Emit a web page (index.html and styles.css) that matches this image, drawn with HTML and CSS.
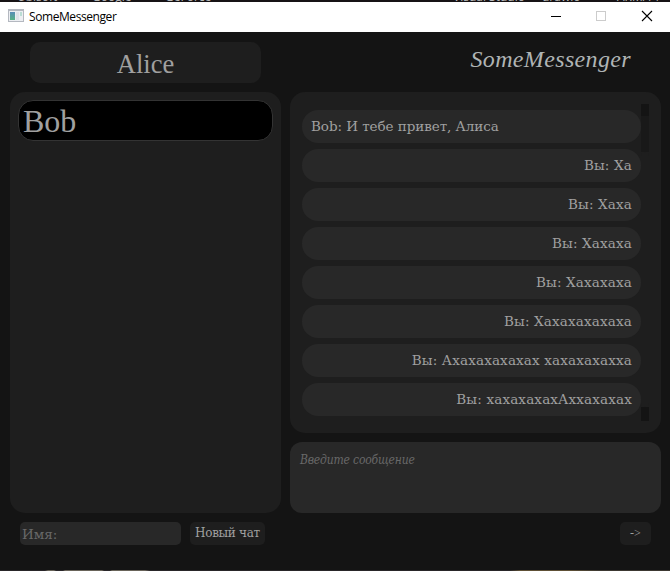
FILE: index.html
```
<!DOCTYPE html>
<html lang="ru">
<head>
<meta charset="utf-8">
<title>SomeMessenger</title>
<link rel="stylesheet" href="styles.css">
</head>
<body>
<div class="desktop-top"><span class="d1">Ubisoft</span><span class="d2">Google</span><span class="d3">GeForce</span><span class="d4">Visual Studio</span><span class="d5">drawio</span><span class="d6">ARMA 1</span></div>
<header class="titlebar">
  <svg class="app-icon" width="16" height="14" viewBox="0 0 16 14"><defs><linearGradient id="g" x1="0" y1="0" x2="0" y2="1"><stop offset="0" stop-color="#5a8db8"/><stop offset="1" stop-color="#58b184"/></linearGradient></defs><path fill="#b4b8c0" d="M0 0h16v13H0z"/><path fill="#eceef2" d="M1 2h14v10H1z"/><path fill="url(#g)" d="M2 3h5v8H2z"/><path fill="#dfe2e8" d="M8 3h3v8H8z"/><path fill="#b9ddd4" d="M12 3h2v4h-2z"/></svg>
  <span class="window-title">SomeMessenger</span>
  <svg class="controls" width="102" height="12" viewBox="0 0 102 12" fill="none" shape-rendering="crispEdges"><path stroke="#000" d="M0 6.500h10"/><path stroke="#ccc" d="M45.500 1.500h9v9h-9z"/><path shape-rendering="auto" stroke="#000" stroke-width="1.100" d="M91 1l10 10M101 1L91 11"/></svg>
</header>
<main class="app">
  <section class="side">
    <div class="user">Alice</div>
    <div class="chats"><div class="chat">Bob</div></div>
    <div class="new-chat"><div class="name">Имя:</div><div class="button create">Новый чат</div></div>
  </section>
  <section class="talk">
    <h1 class="brand">SomeMessenger</h1>
    <div class="messages">
      <div class="rows">
        <div class="row from">Bob: И тебе привет, Алиса</div>
        <div class="row">Вы: Ха</div>
        <div class="row">Вы: Хаха</div>
        <div class="row">Вы: Хахаха</div>
        <div class="row">Вы: Хахахаха</div>
        <div class="row">Вы: Хахахахахаха</div>
        <div class="row">Вы: Ахахахахахах хахахахахха</div>
        <div class="row">Вы: хахахахахАххахахах</div>
      </div>
      <div class="scroll"><i class="cap"></i><i class="thumb"></i><i class="track"></i><i class="cap end"></i></div>
    </div>
    <div class="compose">Введите сообщение</div>
    <div class="button send">-&gt;</div>
  </section>
</main>
<div class="desktop-bottom"></div>
</body>
</html>
```
FILE: styles.css
```
* { box-sizing: border-box; }
body { margin: 0; width: 670px; height: 571px; overflow: hidden; background: #141414; color: #a0a0a0; font-family: "DejaVu Serif", serif; }
.desktop-top { position: relative; height: 2px; overflow: hidden; background: #171315; color: #bbb; font: 12px/12px "Open Sans", sans-serif; }
.desktop-top span { position: absolute; bottom: -1px; white-space: nowrap; }
.d1 { left: 17px; } .d2 { left: 92px; } .d3 { left: 165px; } .d4 { left: 453px; } .d5 { left: 542px; } .d6 { left: 617px; }
.titlebar { height: 30px; background: #fff; display: flex; align-items: center; padding: 0 17px 0 8px; }
.app-icon { margin-bottom: 2px; }
.window-title { flex: 1; margin-left: 5px; color: #000; font: 12px/16px "Open Sans", sans-serif; letter-spacing: -.42px; }
.controls { margin-bottom: 2px; }
.app { height: 538px; display: flex; gap: 9px; padding: 10px 9px 0 10px; }
.side { width: 271px; }
.user { width: 231px; height: 41px; margin-left: 20px; border-radius: 10px; background: #1e1e1e; font: 26.5px/44px "Liberation Serif", serif; text-align: center; }
.chats { height: 421px; margin-top: 9px; padding: 8px; border-radius: 15px; background: #1e1e1e; }
.chat { height: 41px; padding-left: 4px; border: 1px solid #333; border-radius: 15px; background: #000; font: 32px/41px "Liberation Serif", serif; }
.new-chat { display: flex; gap: 9px; margin: 9px 0 0 10px; }
.name { width: 161px; height: 23px; padding-left: 2px; border-radius: 5px; background: #282828; color: #686868; font-size: 13.5px; line-height: 24px; }
.button { height: 23px; border-radius: 5px; background: #1e1e1e; font-size: 12px; line-height: 23px; text-align: center; white-space: nowrap; }
.create { width: 75px; letter-spacing: -.3px; }
.talk { width: 371px; }
.brand { height: 41px; margin: 0 30px 9px 0; color: #b0b4b4; font: italic 24px/35px "Liberation Serif", serif; letter-spacing: .35px; text-align: right; }
.messages { height: 341px; padding: 12px; border-radius: 15px; background: #1e1e1e; display: flex; }
.rows { width: 339px; padding-top: 6px; display: flex; flex-direction: column; gap: 6px; }
.row { height: 33px; padding: 0 9px; border-radius: 16px; background: #282828; font-size: 13.5px; line-height: 33px; letter-spacing: .16px; text-align: right; white-space: nowrap; }
.from { text-align: left; letter-spacing: -.06px; }
.scroll { width: 8px; height: 317px; display: flex; flex-direction: column; }
.cap { height: 12px; background: #141414; }
.thumb { height: 36px; background: #191919; }
.track { flex: 1; border-radius: 4px; background: #1e1e1e; }
.end { height: 14px; }
.compose { height: 71px; margin-top: 9px; padding: 10px; border-radius: 12px; background: #282828; color: #696969; font: italic 12px/16px "DejaVu Serif Condensed", "DejaVu Serif", serif; font-stretch: semi-condensed; letter-spacing: -.18px; }
.send { width: 31px; margin: 9px 10px 0 auto; font-family: "Liberation Serif", serif; }
.desktop-bottom { height: 1px; background: linear-gradient(90deg, #292629 0 45px, #69645a 48px 54px, #292629 56px 63px, #69645a 65px 102px, #292629 104px 110px, #69645a 112px 145px, #292629 150px 510px, #5e5036 520px 570px, #3c3832 600px); }
```
